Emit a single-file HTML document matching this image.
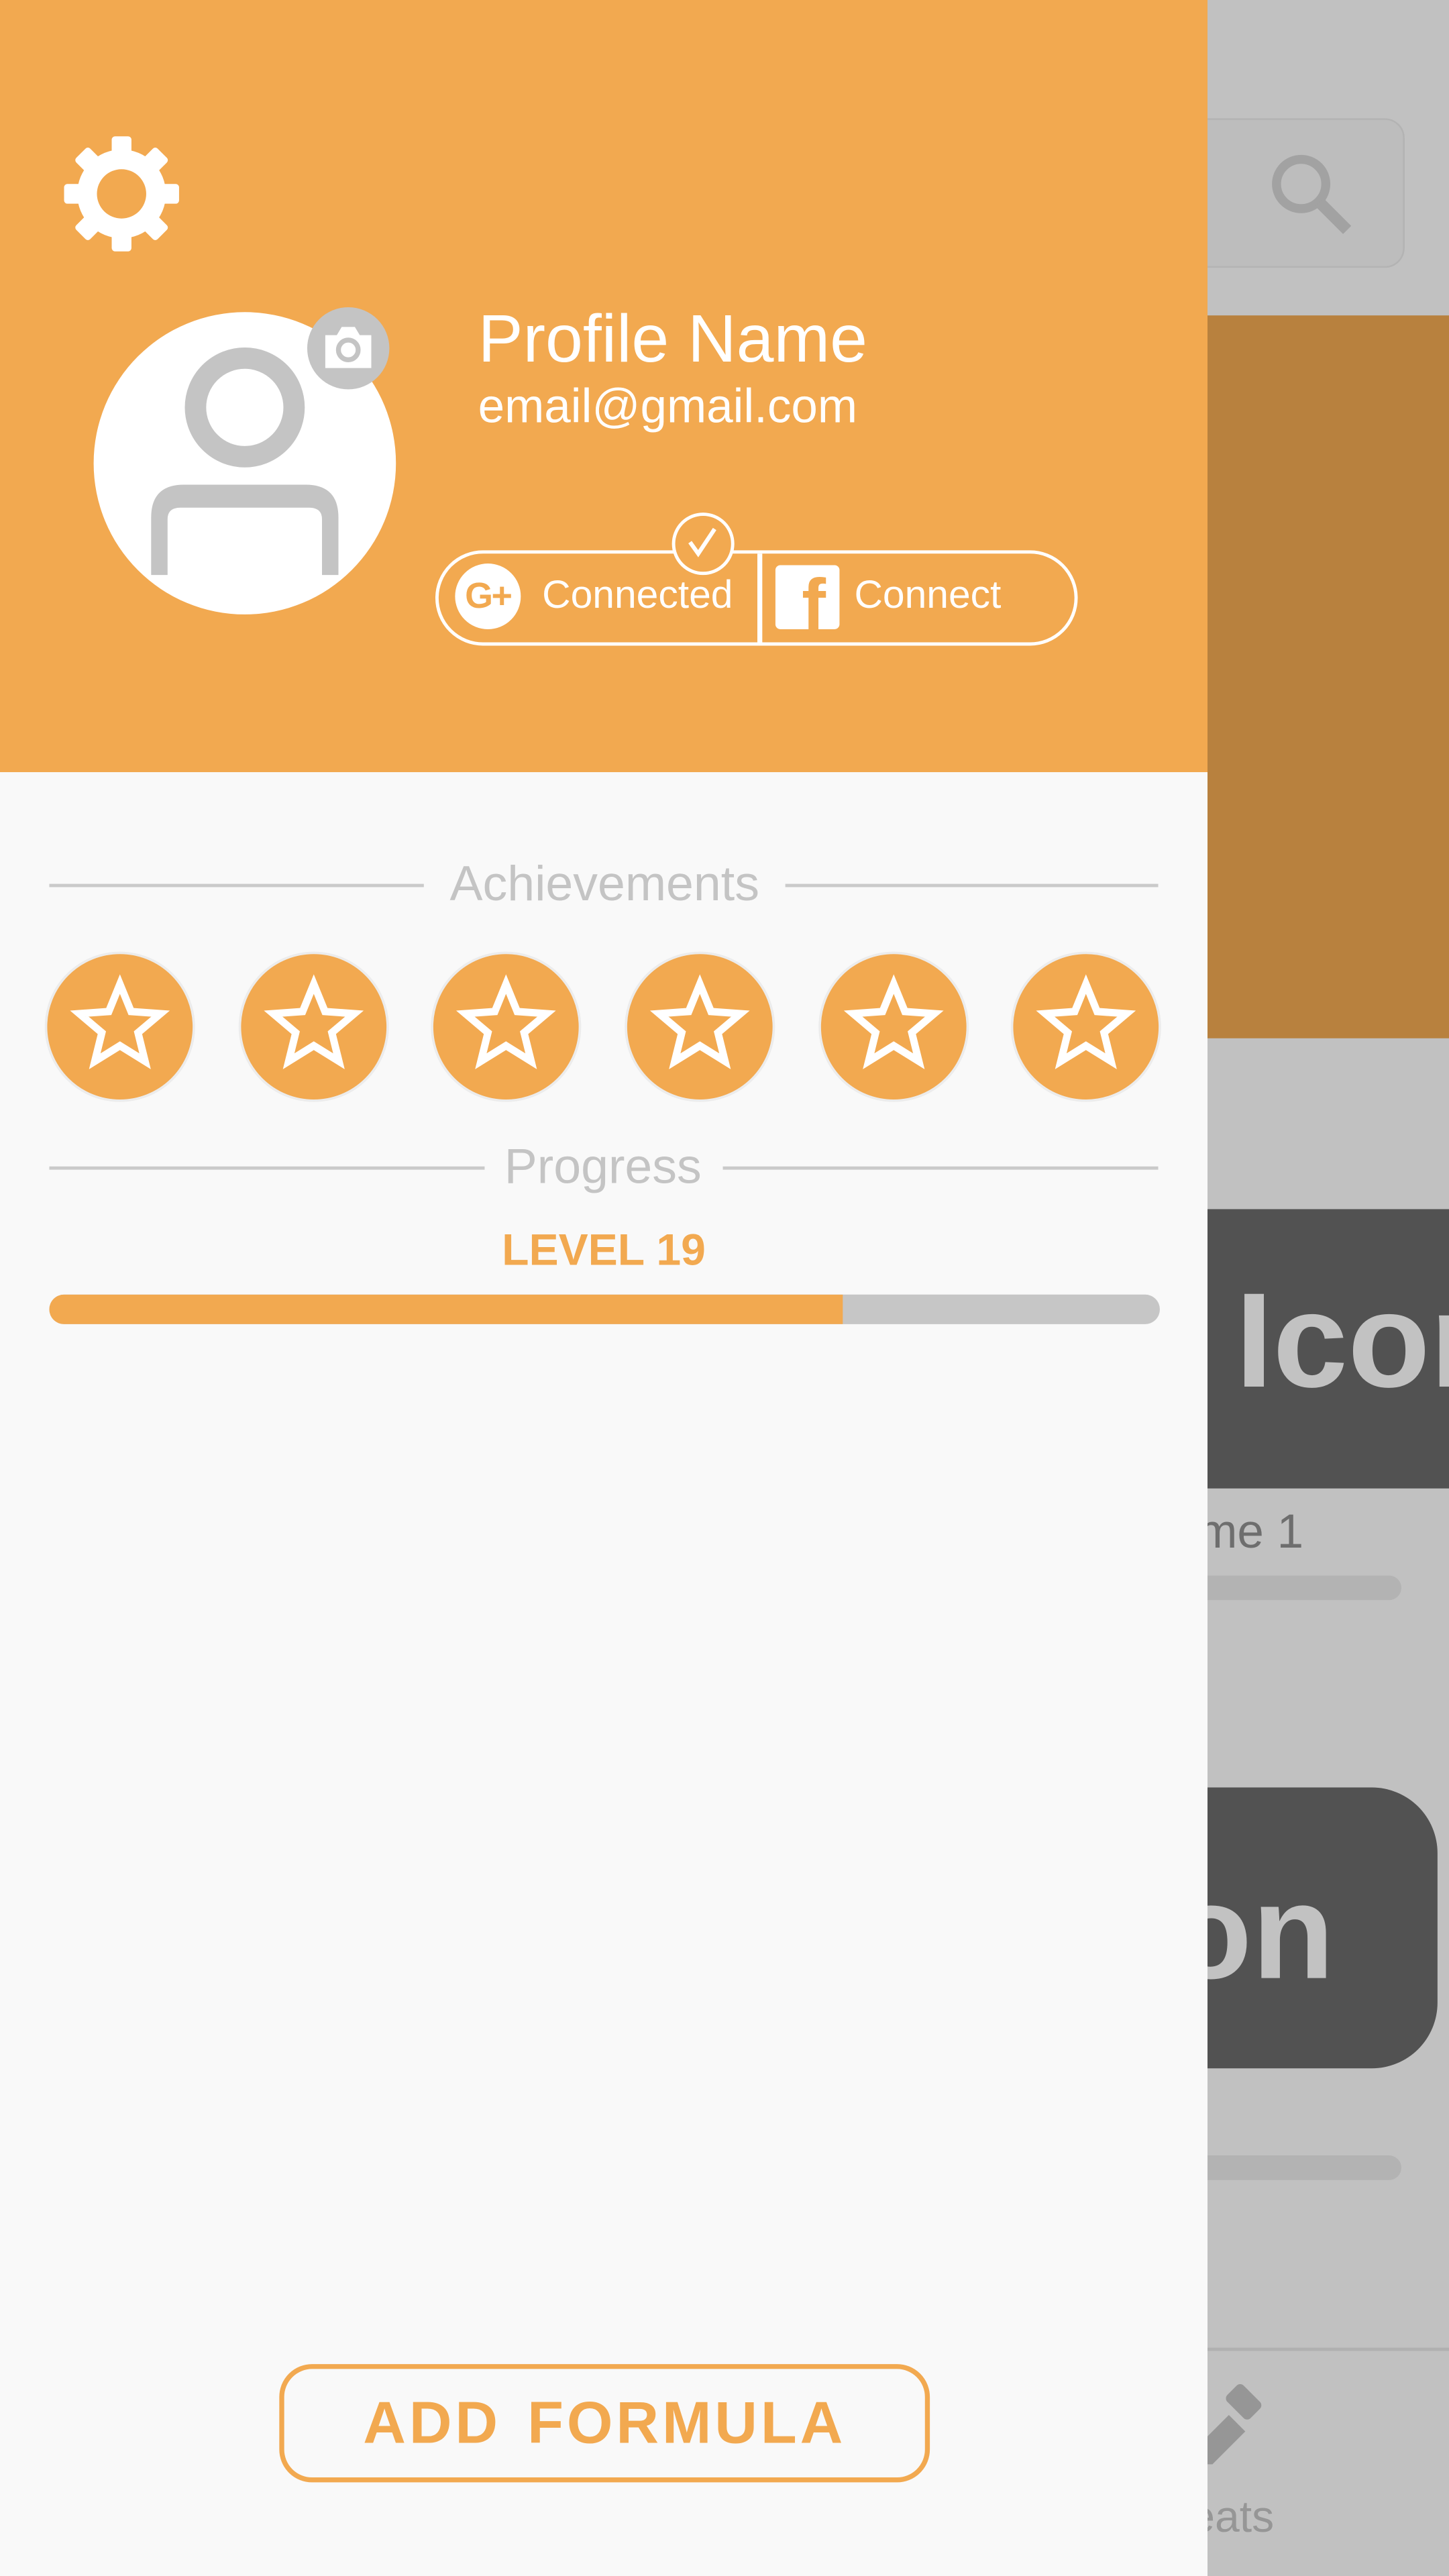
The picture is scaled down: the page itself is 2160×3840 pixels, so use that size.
<!DOCTYPE html>
<html><head><meta charset="utf-8"><style>
html,body{margin:0;padding:0;width:2160px;height:3840px;overflow:hidden;background:#c1c1c1}
#w{position:absolute;left:0;top:0;width:882px;height:1568px;transform:scale(2.44898);transform-origin:0 0;font-family:"Liberation Sans","DejaVu Sans",sans-serif}
.a{position:absolute}
</style></head><body><div id="w">
<div class="a" style="left:0;top:0;width:882px;height:1568px;background:#c1c1c1"></div>
<div class="a" style="left:600px;top:72px;width:253px;height:89px;border:1.5px solid #b3b3b3;border-radius:12px;background:#bdbdbd"></div>
<svg class="a" style="left:770px;top:90px" width="56" height="56" viewBox="0 0 56 56"><circle cx="22" cy="22" r="15" fill="none" stroke="#a2a2a2" stroke-width="5.5"/><line x1="33" y1="33" x2="50" y2="50" stroke="#a2a2a2" stroke-width="7"/></svg>
<div class="a" style="left:600px;top:192px;width:282px;height:440px;background:#b8813e"></div>
<div class="a" style="left:600px;top:736px;width:282px;height:170px;background:#525252"></div>
<div class="a" style="left:752px;top:776px;font-size:82px;font-weight:bold;color:#c2c2c2;white-space:nowrap;line-height:1">Icon</div>
<div class="a" style="left:680px;top:916px;font-size:29px;color:#6e6e6e;white-space:nowrap;line-height:1.2">Th<span style="margin-left:-1px"></span>eme 1</div>
<div class="a" style="left:600px;top:959px;width:253px;height:15px;border-radius:8px;background:#b3b3b3"></div>
<div class="a" style="left:560px;top:1088px;width:315px;height:171px;border-radius:40px;background:#525252"></div>
<div class="a" style="left:712px;top:1136px;font-size:82px;font-weight:bold;color:#c2c2c2;white-space:nowrap;line-height:1">on</div>
<div class="a" style="left:600px;top:1312px;width:253px;height:15px;border-radius:8px;background:#b3b3b3"></div>
<div class="a" style="left:600px;top:1429px;width:282px;height:2px;background:#b0b0b0"></div>
<svg class="a" style="left:720px;top:1450px" width="50" height="50" viewBox="0 0 50 50"><path d="M0,48 L28,20 L38,30 L10,58Z" fill="#969696"/><rect x="30" y="2" width="14" height="20" rx="3" transform="rotate(-45 37 12)" fill="#969696"/></svg>
<div class="a" style="left:700px;top:1516px;font-size:27px;color:#969696;white-space:nowrap;line-height:1.2">Treats</div>

<div class="a" style="left:0;top:0;width:735px;height:1568px;background:#f9f9f9"></div>
<div class="a" style="left:0;top:0;width:735px;height:470px;background:#f2a950"></div>
<svg class="a" style="left:38px;top:82px" width="72" height="72" viewBox="-36 -36 72 72">
<g fill="#fff"><rect x="-6" y="-35" width="12" height="70" rx="2"/><rect x="-6" y="-35" width="12" height="70" rx="2" transform="rotate(45)"/><rect x="-6" y="-35" width="12" height="70" rx="2" transform="rotate(90)"/><rect x="-6" y="-35" width="12" height="70" rx="2" transform="rotate(135)"/><circle r="27"/></g><circle r="15" fill="#f2a950"/></svg>
<div class="a" style="left:57px;top:190px;width:184px;height:184px;border-radius:50%;background:#fff;overflow:hidden">
<svg width="184" height="184" viewBox="0 0 184 184"><circle cx="92" cy="58" r="30" fill="none" stroke="#c4c4c4" stroke-width="13"/><path d="M35,160 L35,125 Q35,105 55,105 L129,105 Q149,105 149,125 L149,160 L139,160 L139,126 Q139,119 131,119 L53,119 Q45,119 45,126 L45,160Z" fill="#c4c4c4"/></svg></div>
<div class="a" style="left:187px;top:187px;width:50px;height:50px;border-radius:50%;background:#c4c4c4"></div>
<svg class="a" style="left:195px;top:196px" width="34" height="32" viewBox="0 0 34 32"><path d="M3,8 L10,8 L13,3 L21,3 L24,8 L31,8 L31,28 L3,28Z" fill="#fff"/><circle cx="17" cy="17" r="6" fill="none" stroke="#c4c4c4" stroke-width="3"/></svg>
<div class="a" style="left:291px;top:182px;font-size:41px;color:#fff;white-space:nowrap;line-height:1.2">Profile Name</div>
<div class="a" style="left:291px;top:231px;font-size:29px;color:#fff;white-space:nowrap;line-height:1.2">email@gmail.com</div>
<div class="a" style="left:265px;top:335px;width:387px;height:54px;border:2.5px solid #fff;border-radius:30px"></div>
<div class="a" style="left:461px;top:337px;width:2.5px;height:54px;background:#fff"></div>
<div class="a" style="left:277px;top:343px;width:40px;height:40px;border-radius:50%;background:#fff;color:#f2a950;font-weight:bold;font-size:22px;line-height:40px;text-align:center;letter-spacing:-1px">G+</div>
<div class="a" style="left:330px;top:349px;font-size:24px;color:#fff;white-space:nowrap;line-height:1.2">Connected</div>
<div class="a" style="left:472px;top:344px;width:39px;height:39px;border-radius:3px;background:#fff;overflow:hidden"><div class="a" style="left:16px;top:3px;font-size:44px;font-weight:bold;color:#f2a950;line-height:1">f</div></div>
<div class="a" style="left:520px;top:349px;font-size:24px;color:#fff;white-space:nowrap;line-height:1.2">Connect</div>
<div class="a" style="left:409px;top:312px;width:34px;height:34px;border:2.5px solid #fff;border-radius:50%;background:#f2a950"></div>
<svg class="a" style="left:414px;top:318px" width="28" height="24" viewBox="0 0 28 24"><path d="M6,12 L11,19 L21,4" fill="none" stroke="#fff" stroke-width="2.5"/></svg>

<div class="a" style="left:30px;top:538px;width:228px;height:1.5px;background:#cacaca"></div>
<div class="a" style="left:478px;top:538px;width:227px;height:1.5px;background:#cacaca"></div>
<div class="a" style="left:248px;top:521px;width:240px;text-align:center;font-size:30px;color:#c4c4c4;line-height:1.2">Achievements</div>

<svg class="a" style="left:0;top:570px" width="735" height="110" viewBox="0 570 735 110">
<defs><g id="s"><circle r="45" fill="#f2a950" stroke="#ececec" stroke-width="1.5"/><path d="M0,-26 L6.8,-9.3 L24.7,-8 L11,3.6 L15.3,21 L0,11.5 L-15.3,21 L-11,3.6 L-24.7,-8 L-6.8,-9.3Z" fill="none" stroke="#fff" stroke-width="4.5" stroke-linejoin="miter"/></g></defs>
<use href="#s" x="73" y="625"/><use href="#s" x="191" y="625"/><use href="#s" x="308" y="625"/><use href="#s" x="426" y="625"/><use href="#s" x="544" y="625"/><use href="#s" x="661" y="625"/>
</svg>

<div class="a" style="left:30px;top:710px;width:265px;height:1.5px;background:#cacaca"></div>
<div class="a" style="left:440px;top:710px;width:265px;height:1.5px;background:#cacaca"></div>
<div class="a" style="left:292px;top:693px;width:150px;text-align:center;font-size:30px;color:#c4c4c4;line-height:1.2">Progress</div>
<div class="a" style="left:0;top:745px;width:735px;text-align:center;font-size:27px;font-weight:bold;color:#f2a950;line-height:1.2">LEVEL 19</div>
<div class="a" style="left:30px;top:788px;width:676px;height:18px;border-radius:9px;background:#c6c6c6;overflow:hidden"><div style="width:483px;height:18px;background:#f2a950"></div></div>

<div class="a" style="left:170px;top:1439px;width:390px;height:66px;border:3px solid #f2a950;border-radius:20px;text-align:center;line-height:66px;font-size:36px;font-weight:bold;color:#f2a950;letter-spacing:2px;word-spacing:4px">ADD FORMULA</div>
</div></body></html>
